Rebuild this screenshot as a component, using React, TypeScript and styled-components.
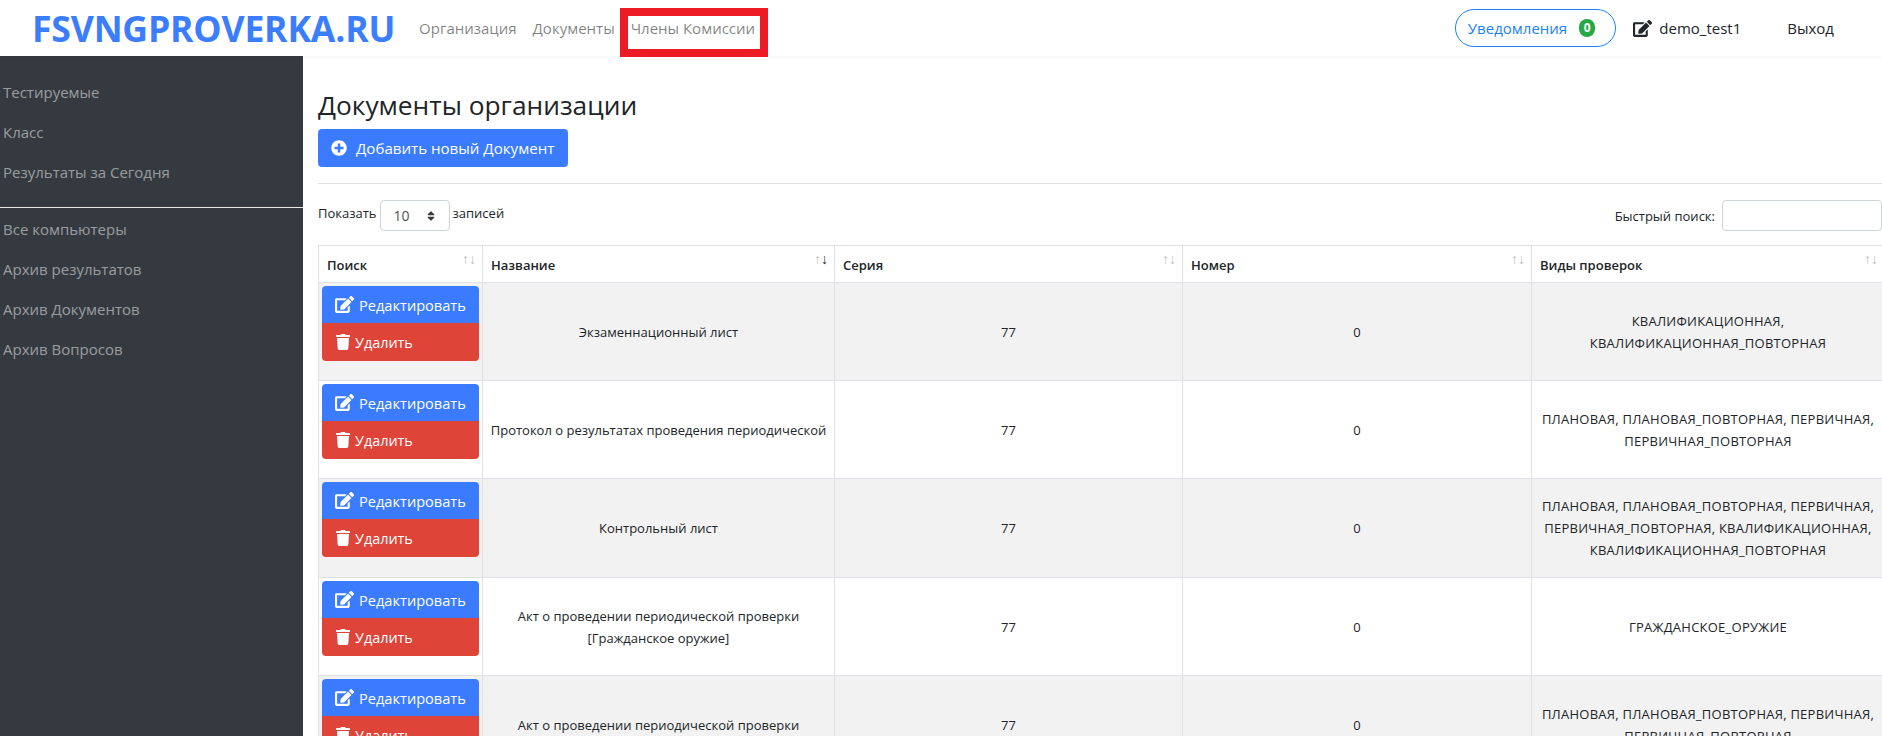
import React from 'react';
import styled, {createGlobalStyle} from 'styled-components';
import {FaEdit, FaPlusCircle, FaSort, FaTrash} from 'react-icons/fa';

const GlobalStyle = createGlobalStyle`
	html, body {
		margin: 0;
		height: 736px;
		overflow: hidden;
		background: #fff;
		font-family: "Open Sans", "Noto Sans", sans-serif;
		color: #212529;
	}
	* {
		box-sizing: border-box;
	}
`

const SIDE_TOP = ['Тестируемые', 'Класс', 'Результаты за Сегодня'];
const SIDE_BOTTOM = ['Все компьютеры', 'Архив результатов', 'Архив Документов', 'Архив Вопросов'];

const DOCS = [
	{name: ['Экзаменнационный лист'], kinds: ['КВАЛИФИКАЦИОННАЯ,', 'КВАЛИФИКАЦИОННАЯ_ПОВТОРНАЯ']},
	{name: ['Протокол о результатах проведения периодической'], kinds: ['ПЛАНОВАЯ, ПЛАНОВАЯ_ПОВТОРНАЯ, ПЕРВИЧНАЯ,', 'ПЕРВИЧНАЯ_ПОВТОРНАЯ']},
	{name: ['Контрольный лист'], kinds: ['ПЛАНОВАЯ, ПЛАНОВАЯ_ПОВТОРНАЯ, ПЕРВИЧНАЯ,', 'ПЕРВИЧНАЯ_ПОВТОРНАЯ, КВАЛИФИКАЦИОННАЯ,', 'КВАЛИФИКАЦИОННАЯ_ПОВТОРНАЯ']},
	{name: ['Акт о проведении периодической проверки', '[Гражданское оружие]'], kinds: ['ГРАЖДАНСКОЕ_ОРУЖИЕ']},
	{name: ['Акт о проведении периодической проверки'], kinds: ['ПЛАНОВАЯ, ПЛАНОВАЯ_ПОВТОРНАЯ, ПЕРВИЧНАЯ,', 'ПЕРВИЧНАЯ_ПОВТОРНАЯ']},
];

const COLUMNS = [
	{title: 'Поиск', width: 164},
	{title: 'Название', width: 352, sorted: true},
	{title: 'Серия', width: 348},
	{title: 'Номер', width: 349},
	{title: 'Виды проверок', width: 353},
];

function App() {
	return (
		<Page>
			<GlobalStyle/>
			<Header>
				<Brand>FSVNGPROVERKA.RU</Brand>
				<Nav>
					<NavItem>Организация</NavItem>
					<NavItem>Документы</NavItem>
					<NavItem>Члены Комиссии</NavItem>
				</Nav>
				<Highlight/>
				<UserBar>
					<NoticeButton>Уведомления<Badge>0</Badge></NoticeButton>
					<UserName><FaEdit size={19}/>demo_test1</UserName>
					<Logout>Выход</Logout>
				</UserBar>
			</Header>
			<Body>
				<Sidebar>
					<SideGroup>
						{SIDE_TOP.map(t => <SideItem key={t}>{t}</SideItem>)}
					</SideGroup>
					<SideGroup $second>
						{SIDE_BOTTOM.map(t => <SideItem key={t}>{t}</SideItem>)}
					</SideGroup>
				</Sidebar>
				<Main>
					<Title>Документы организации</Title>
					<AddButton><FaPlusCircle size={16}/>Добавить новый Документ</AddButton>
					<Rule/>
					<Filters>
						<Length>
							Показать
							<SelectBox>10<FaSort size={12}/></SelectBox>
							записей
						</Length>
						<Search>Быстрый поиск:<SearchInput/></Search>
					</Filters>
					<Table>
						<colgroup>
							{COLUMNS.map(c => <col key={c.title} width={c.width}/>)}
						</colgroup>
						<thead>
							<tr>
								{COLUMNS.map(c => (
									<Th key={c.title}>
										{c.title}
										<SortMark><Arrow>↑</Arrow><Arrow $on={c.sorted}>↓</Arrow></SortMark>
									</Th>
								))}
							</tr>
						</thead>
						<tbody>
							{DOCS.map((d, i) => (
								<Row key={i}>
									<ActionCell>
										<EditButton><FaEdit size={19}/>Редактировать</EditButton>
										<DeleteButton><FaTrash size={16}/>Удалить</DeleteButton>
									</ActionCell>
									<Td>{d.name.map(l => <div key={l}>{l}</div>)}</Td>
									<Td>77</Td>
									<Td>0</Td>
									<Td>{d.kinds.map(l => <KindLine key={l}>{l}</KindLine>)}</Td>
								</Row>
							))}
						</tbody>
					</Table>
				</Main>
			</Body>
		</Page>
	);
}

export default App;

const Page = styled.div`
	width: 1882px;
	height: 736px;
	overflow: hidden;
`

const Header = styled.header`
	position: relative;
	z-index: 2;
	display: flex;
	align-items: center;
	height: 56px;
	padding-left: 32px;
	background: #fff;
	box-shadow: 0 2px 4px rgba(0, 0, 0, .03);
`

const Brand = styled.div`
	font-size: 35.6px;
	font-weight: 700;
	line-height: 50px;
	color: #3a7dff;
	letter-spacing: -0.2px;
`

const Nav = styled.nav`
	display: flex;
	gap: 16px;
	margin-left: 24px;
`

const NavItem = styled.a`
	font-size: 15px;
	color: rgba(0, 0, 0, .5);
`

const Highlight = styled.div`
	position: absolute;
	left: 620px;
	top: 8px;
	width: 148px;
	height: 49px;
	border: 8px solid #ed1c24;
`

const UserBar = styled.div`
	display: flex;
	align-items: center;
	margin-left: auto;
	padding-right: 48px;
	font-size: 15px;
`

const NoticeButton = styled.button`
	display: flex;
	align-items: center;
	gap: 12px;
	width: 161px;
	height: 38px;
	padding: 0 0 0 12px;
	border: 1px solid #1a82f7;
	border-radius: 19px;
	background: #fff;
	color: #1a82f7;
	font: inherit;
`

const Badge = styled.span`
	width: 16px;
	height: 18px;
	border-radius: 8px;
	background: #28a745;
	color: #fff;
	font-size: 12px;
	font-weight: 700;
	line-height: 18px;
	text-align: center;
`

const UserName = styled.span`
	display: flex;
	align-items: center;
	gap: 7.5px;
	margin-left: 17px;
`

const Logout = styled.span`
	margin-left: 46px;
`

const Body = styled.div`
	display: flex;
	height: 680px;
`

const Sidebar = styled.aside`
	flex: 0 0 303px;
	padding-top: 16px;
	background: #343a40;
`

const SideGroup = styled.div<{ $second?: boolean }>`
	padding-bottom: ${p => p.$second ? 0 : 15}px;
	border-bottom: ${p => p.$second ? 'none' : '1px solid #e8e8e8'};
	padding-top: ${p => p.$second ? 1 : 0}px;
`

const SideItem = styled.div`
	height: 40px;
	padding-left: 3px;
	font-size: 15px;
	line-height: 40px;
	color: rgba(255, 255, 255, .5);
`

const Main = styled.main`
	flex: 0 0 auto;
	width: 1579px;
	padding: 32px 0 0 15px;
`

const Title = styled.h3`
	margin: 0 0 7px;
	font-size: 26.3px;
	font-weight: 400;
	line-height: 34px;
`

const AddButton = styled.button`
	display: flex;
	align-items: center;
	gap: 9px;
	width: 250px;
	height: 38px;
	padding: 0 0 0 13px;
	border: none;
	border-radius: 4px;
	background: #3a7bff;
	color: #fff;
	font: inherit;
	font-size: 15.1px;
`

const Rule = styled.hr`
	margin: 16px 0;
	border: none;
	border-top: 1px solid #dee2e6;
`

const Filters = styled.div`
	display: flex;
	justify-content: space-between;
	height: 31px;
	margin-bottom: 14px;
	font-size: 13px;
`

const Length = styled.label`
	display: flex;
	align-items: flex-start;
	gap: 3px;
	line-height: 27px;
`

const SelectBox = styled.div`
	display: flex;
	align-items: center;
	justify-content: space-between;
	width: 70px;
	height: 31px;
	padding: 0 12px 0 13px;
	border: 1px solid #ced4da;
	border-radius: 4px;
	color: #495057;
	font-size: 14px;
	& > svg {
		color: #343a40;
	}
`

const Search = styled.label`
	display: flex;
	align-items: center;
	gap: 7px;
`

const SearchInput = styled.input`
	width: 160px;
	height: 31px;
	border: 1px solid #ced4da;
	border-radius: 4px;
`

const Table = styled.table`
	width: 1566px;
	table-layout: fixed;
	border-collapse: collapse;
	font-size: 13px;
`

const Th = styled.th`
	position: relative;
	height: 37px;
	padding: 1px 8px 0;
	border: 1px solid #dee2e6;
	border-bottom: none;
	font-weight: 600;
	text-align: left;
`

const SortMark = styled.span`
	position: absolute;
	top: 4px;
	right: 6px;
	font-size: 14px;
	font-weight: 400;
	line-height: 18px;
`

const Arrow = styled.span<{ $on?: boolean }>`
	color: #212529;
	opacity: ${p => p.$on ? 1 : .3};
`

const Row = styled.tr`
	&:nth-child(odd) {
		background: #f2f2f2;
	}
	&:nth-child(3) > td {
		height: 99px;
	}
`

const Td = styled.td`
	height: 98px;
	padding: 4px 7px;
	border: 1px solid #dee2e6;
	line-height: 22px;
	text-align: center;
`

const KindLine = styled.div`
	letter-spacing: .25px;
	white-space: nowrap;
`

const ActionCell = styled.td`
	height: 98px;
	padding: 3px;
	border: 1px solid #dee2e6;
	vertical-align: top;
`

const ActionButton = styled.button`
	display: flex;
	align-items: center;
	width: 100%;
	padding: 0 0 0 13px;
	border: none;
	color: #fff;
	font: inherit;
	font-size: 14.6px;
`

const EditButton = styled(ActionButton)`
	gap: 5px;
	height: 37px;
	border-radius: 4px 4px 0 0;
	background: #3a7bff;
`

const DeleteButton = styled(ActionButton)`
	gap: 4px;
	height: 38px;
	border-radius: 0 0 4px 4px;
	background: #df4439;
	font-size: 14.4px;
`
